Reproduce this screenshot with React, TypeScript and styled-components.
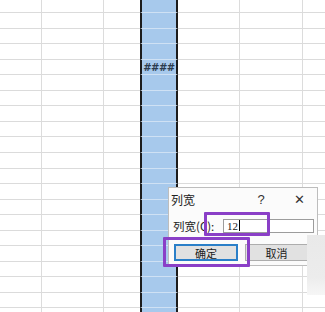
import React from 'react';
import styled, { createGlobalStyle } from 'styled-components';

const GlobalStyle = createGlobalStyle`
  html, body {
    margin: 0;
    padding: 0;
    background: #fff;
    overflow: hidden;
  }
  body {
    font-family: 'Noto Sans CJK SC', 'Noto Sans', sans-serif;
  }
`;

const Page = styled.div`
  position: relative;
  width: 325px;
  height: 312px;
  overflow: hidden;
  background: #fff;
`;

const Sheet = styled.div`
  display: flex;
  flex-direction: column;
`;

const Row = styled.div<{ $h: number }>`
  display: flex;
  height: ${(p) => p.$h}px;
  flex-shrink: 0;
`;

const Cell = styled.div<{ $w: number; $line?: boolean }>`
  box-sizing: border-box;
  width: ${(p) => p.$w}px;
  flex-shrink: 0;
  height: 100%;
  border-bottom: 1px solid #dbdbdb;
  border-right: ${(p) => (p.$line ? '1px solid #dcdcdc' : 'none')};
`;

const SelectedCell = styled.div`
  box-sizing: border-box;
  width: 38px;
  flex-shrink: 0;
  height: 100%;
  background: #a7c9ec;
  border-left: 2px solid #1c1c1c;
  border-right: 2px solid #1c1c1c;
  border-bottom: 1px solid #cfe1f4;
  display: flex;
  align-items: center;
  justify-content: center;
  font-family: 'DejaVu Sans', sans-serif;
  font-size: 10px;
  font-weight: bold;
  letter-spacing: -0.5px;
  color: #2b3b4e;
`;

const Dialog = styled.div`
  position: absolute;
  left: 168px;
  top: 187px;
  width: 150px;
  height: 79px;
  box-sizing: border-box;
  background: #fbfbfb;
  border: 1px solid #bdbdbd;
  display: flex;
  flex-direction: column;
  font-size: 11px;
  color: #222;
`;

const TitleBar = styled.div`
  height: 22px;
  display: flex;
  align-items: center;
  padding-left: 2px;
  font-size: 12px;
`;

const Title = styled.span`
  flex: 1;
`;

const TitleBtn = styled.span<{ $w: number }>`
  width: ${(p) => p.$w}px;
  text-align: center;
  font-family: 'Liberation Sans', sans-serif;
  font-size: 13px;
  color: #333;
`;

const FieldRow = styled.div`
  display: flex;
  align-items: center;
  height: 19px;
  padding-left: 4px;
  margin-top: 6px;
`;

const Label = styled.span`
  width: 50px;
  font-size: 11.5px;
`;

const Input = styled.div`
  box-sizing: border-box;
  width: 91px;
  height: 14px;
  border: 1px solid #9c9c9c;
  background: #fff;
  display: flex;
  align-items: center;
  padding-left: 3px;
  font-family: 'Liberation Serif', serif;
  font-size: 11px;
`;

const Caret = styled.span`
  display: inline-block;
  width: 1px;
  height: 11px;
  background: #000;
  margin-left: 1px;
`;

const ButtonRow = styled.div`
  display: flex;
  gap: 7px;
  padding-left: 5px;
  margin-top: 9px;
`;

const Button = styled.div<{ $primary?: boolean }>`
  box-sizing: border-box;
  width: ${(p) => (p.$primary ? 64 : 63)}px;
  height: 17px;
  background: #e1e1e1;
  border: ${(p) => (p.$primary ? '2px solid #2a7fc8' : '1px solid #adadad')};
  display: flex;
  align-items: center;
  justify-content: center;
  font-size: 11px;
  color: #222;
`;

const Highlight = styled.div<{ $x: number; $y: number; $w: number; $h: number }>`
  position: absolute;
  left: ${(p) => p.$x}px;
  top: ${(p) => p.$y}px;
  width: ${(p) => p.$w}px;
  height: ${(p) => p.$h}px;
  box-sizing: border-box;
  border: 3px solid #8a3fc7;
  border-radius: 1px;
`;

const Shade = styled.div`
  position: absolute;
  left: 307px;
  top: 235px;
  width: 18px;
  height: 60px;
  background: linear-gradient(#e9e9e9 0%, #ececec 70%, #f6f6f6 100%);
`;

const rowLines = Array.from({ length: 21 }, (_, k) => Math.round(12 + 15.55 * k));
const rowHeights = rowLines.map((y, i) => (i === 0 ? y + 1 : y - rowLines[i - 1]));

export default function App() {
  return (
    <Page>
      <GlobalStyle />
      <Sheet>
        {rowHeights.map((h, i) => (
          <Row key={i} $h={h}>
            <Cell $w={42} $line />
            <Cell $w={62} $line />
            <Cell $w={36} />
            <SelectedCell>{i === 4 ? '####' : null}</SelectedCell>
            <Cell $w={62} $line />
            <Cell $w={63} $line />
            <Cell $w={22} />
          </Row>
        ))}
      </Sheet>

      <Dialog>
        <TitleBar>
          <Title>列宽</Title>
          <TitleBtn $w={20}>?</TitleBtn>
          <TitleBtn $w={18} style={{ marginLeft: 19, marginRight: 9 }}>✕</TitleBtn>
        </TitleBar>
        <FieldRow>
          <Label>列宽(C):</Label>
          <Input>
            12
            <Caret />
          </Input>
        </FieldRow>
        <ButtonRow>
          <Button $primary>确定</Button>
          <Button>取消</Button>
        </ButtonRow>
      </Dialog>

      <Shade />
      <Highlight $x={204} $y={212} $w={66} $h={24} />
      <Highlight $x={163} $y={237} $w={87} $h={30} />
    </Page>
  );
}
